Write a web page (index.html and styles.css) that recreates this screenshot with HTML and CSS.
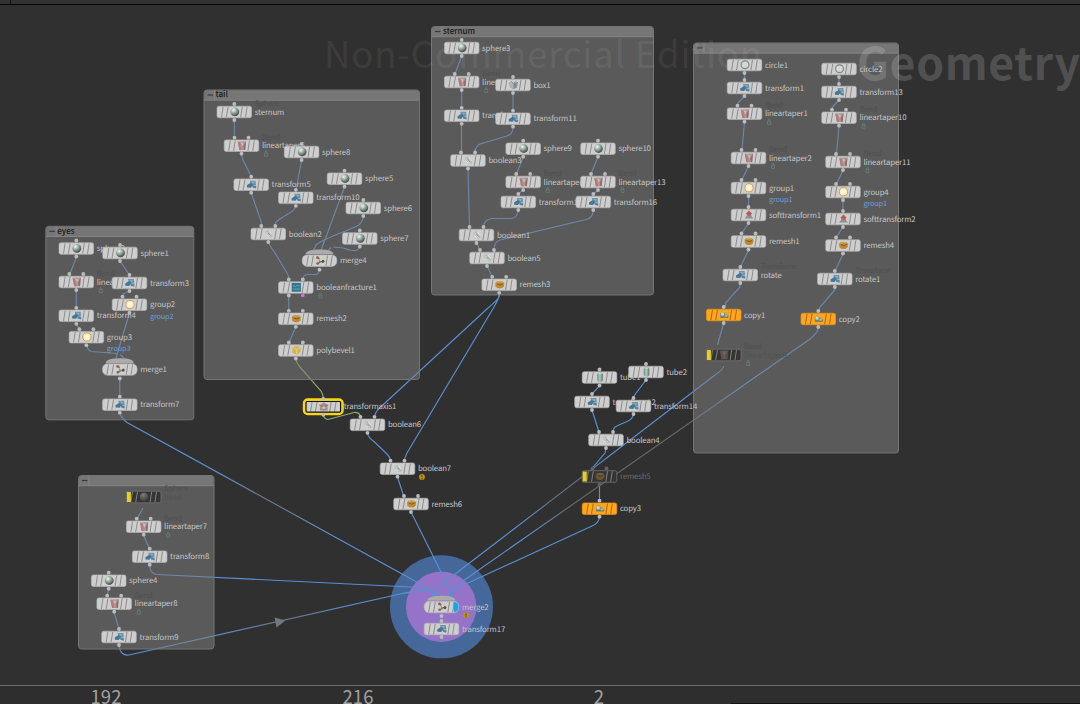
FILE: index.html
```html
<!DOCTYPE html>
<html lang="en">
<head>
<meta charset="utf-8">
<title>Network editor</title>
<link rel="stylesheet" href="styles.css">
</head>
<body>
<header class="topbar"><span class="topbar-split"></span></header>
<main class="network">
<svg class="canvas" viewBox="0 5 1080 680" width="1080" height="680">
  <defs>
    <radialGradient id="ball" cx=".36" cy=".3" r=".75"><stop offset="0" stop-color="#f2f7f3"/><stop offset=".35" stop-color="#a9bab0"/><stop offset="1" stop-color="#34433e"/></radialGradient>
    <radialGradient id="glow"><stop offset="0" stop-color="#fffef0"/><stop offset="1" stop-color="#ffeab0"/></radialGradient>
    <linearGradient id="tubeFill"><stop offset="0" stop-color="#6f9384"/><stop offset=".5" stop-color="#b0c6bb"/><stop offset="1" stop-color="#547365"/></linearGradient>
    <linearGradient id="fadeEyes" gradientUnits="userSpaceOnUse" x1="124" y1="422" x2="430" y2="590"><stop offset=".3" stop-color="#5a8fd2"/><stop offset=".42" stop-color="#6c7a8c"/><stop offset=".5" stop-color="#6c7a8c"/><stop offset=".66" stop-color="#5a8fd2"/></linearGradient>
    <linearGradient id="fadeArrow" gradientUnits="userSpaceOnUse" x1="130" y1="655" x2="420" y2="592"><stop offset=".3" stop-color="#5a8fd2"/><stop offset=".5" stop-color="#68798d"/><stop offset=".58" stop-color="#68798d"/><stop offset=".74" stop-color="#5a8fd2"/></linearGradient>
    <linearGradient id="fadeBend" gradientUnits="userSpaceOnUse" x1="723" y1="367" x2="441" y2="590"><stop offset=".4" stop-color="#5a8fd2"/><stop offset=".5" stop-color="#686e76"/><stop offset=".6" stop-color="#686e76"/><stop offset=".72" stop-color="#5a8fd2"/></linearGradient>
    <linearGradient id="fadeCopy" gradientUnits="userSpaceOnUse" x1="818" y1="330" x2="448" y2="592"><stop offset=".22" stop-color="#5a8fd2"/><stop offset=".33" stop-color="#636669"/><stop offset=".66" stop-color="#636669"/><stop offset=".8" stop-color="#5a8fd2"/></linearGradient>

    <g id="slats"><path d="M-12.800 5.200L-11.200-5.200M-8 5.200L-6.200-5.200M6.400 5.200L8-5.200M11.200 5.200L12.800-5.200"/></g>
    <g id="i-sphere"><circle r="4.400" fill="url(#ball)"/></g>
    <g id="i-circle"><circle r="3.900" fill="#d3d8d5" stroke="#7d8a84" stroke-width="1.200"/></g>
    <g id="i-group"><circle r="4.100" fill="url(#glow)" stroke="#c99a5c" stroke-width=".9"/></g>
    <g id="i-bend"><path d="M-4.200-4L4-4.200 3.200 4.400-2.600 4.400Z" fill="#a89896"/><path d="M-4.200-4L-1.800-2.400-.4 4.400-2.600 4.400Z" fill="#b97676"/><path d="M4-4.600L1.400.6 1.800 4.200 3.200 4.400Z" fill="#96686a"/><path d="M-1.400-3L1.400-2.400 .4 1Z" fill="#c9c3bf"/></g>
    <g id="i-transform"><path d="M-2-3.800L3.800-3.800 4.400.8.5.4-1.400-1.200Z" fill="#6b94a9"/><path d="M-4.800.8L-1-1.800 1.600 0-.8 3.200-4.600 3Z" fill="#457696"/><path d="M.4.200L4.600 1.600 4.200 4 .8 3Z" fill="#5484a0"/><path d="M-.6-3L2.800-2.400 1.800-.8Z" fill="#9ab4bf"/></g>
    <g id="i-boolean"><path d="M-3.600-2.600L-.6-3.800 2 0 3.800 1.800 2.600 3.800-.4 3 -2.600 1Z" fill="#b3bab4"/><path d="M-2.400-2L1.600 2.600M-3 .4L0 3M.4-2.600L3 .6" stroke="#e6e9e6" stroke-width=".9"/><path d="M-1-1L1.400 1.600" stroke="#7d8a83" stroke-width=".8"/></g>
    <g id="i-merge"><path d="M-3-3L-.4-1.400 0 1.600-3 3.400M-.2.200L3 .4" fill="none" stroke="#857d6c" stroke-width="1.800"/><circle cx="-2.600" cy="-2.900" r="1.400" fill="#8f5f62"/><circle cx="-2.400" cy="3" r="1.300" fill="#776c62"/><circle cx="2.800" cy=".8" r="1.600" fill="#5c504b"/><circle cx=".8" cy="-1" r="1.500" fill="#d0d6b9"/></g>
    <g id="i-remesh"><path d="M-4.400-1.600Q-3.600-3.600 0-3.600T4.600-1.600L4.200 1.600Q2.600 3.800 0 3.800T-4.200 1.600Z" fill="#bd8830"/><path d="M-2.600-.8Q0 1.400 3-.6" stroke="#80591f" stroke-width="1" fill="none"/><path d="M-3-2Q0-3.400 3-2.200" stroke="#deb35f" stroke-width=".9" fill="none"/></g>
    <g id="i-bevel"><path d="M-4-2.800L0-4.400 4.200-2.800 4.200 1.800.6 4.400-3.800 2.400Z" fill="#d0b44c"/><path d="M-3.400-2.600L.4-1.200 3.800-2.600M.4-1.200L.4 4" stroke="#e8d688" stroke-width=".9" fill="none"/></g>
    <g id="i-fracture"><rect x="-4.600" y="-4.400" width="9.200" height="8.800" fill="#33748f"/><path d="M-3.600-1.600L-1-.8 1-1.800 3.800-1.200M-3.600 1.800H3.800" stroke="#76a5b5" stroke-width=".9" fill="none"/></g>
    <g id="i-axis"><path d="M-4 4L-3.400-1.600 0-4.400 3.400-1.600 4 4Z" fill="#a08e8c"/><path d="M-4.400-1.600L0 .2 4.400-1.600M0 .2V4" stroke="#a4656a" stroke-width="1.100" fill="none"/><circle cy="1" r="1.600" fill="#b9cba9"/></g>
    <g id="i-soft"><path d="M-4.600 3.800Q-2.800 3-2.200.2L2.200.2Q2.800 3 4.600 3.800Z" fill="#84948e"/><path d="M-3-1.400L0-4.200 3-1.400 1.400.8-1.400.8Z" fill="#c05558"/></g>
    <g id="i-box"><path d="M-4.400-2.800L0-1.400 4.400-3 3.400 2.600 0 4.400-3.400 2.400Z" fill="#7f8f92"/><path d="M-4-2.600L0-1.400 0 4.400-3.200 2.400Z" fill="#a9b6b8"/><path d="M-2.800-3.800L0-1.400 3-3.800" stroke="#728286" stroke-width=".8" fill="none"/></g>
    <g id="i-tube"><rect x="-2.800" y="-4.600" width="5.600" height="9.200" rx="1.800" fill="url(#tubeFill)"/><ellipse cy="-3.600" rx="2" ry=".6" fill="#c3d1ca"/></g>
    <g id="i-copy"><path d="M-4.400-1.200L-1.600-3.200.6-1.800 4.600 1 4 2.800-3.800 2.400Z" fill="#7e9180"/><circle cx="-1.800" cy="-.8" r="1.700" fill="#cad7c6"/><circle cx="2" cy="1.200" r="1.200" fill="#b2c0a9"/><path d="M-3.800 2.400H4" stroke="#566151" stroke-width=".8"/></g>
  </defs>

  <circle class="ring-display" cx="441.500" cy="606.800" r="51.500"/>
  <circle class="ring-template" cx="441.200" cy="606.800" r="35.200"/>
  <g id="wires"></g>
  <path class="flow-arrow" d="M274.500 617.500L285.500 620.500 276.500 627.500Z"/>
  <g id="boxes"></g>
  <text class="mark" x="324" y="68" textLength="438">Non-Commercial Edition</text>
  <text class="mark mark-bold" x="857" y="79.500" textLength="223">Geometry</text>
  <g id="labels"></g>
  <g id="nodes"></g>
</svg>
</main>
<footer class="timeline">
  <span class="frame">192</span><span class="frame">216</span><span class="frame">2</span>
  <i class="playbar"></i>
</footer>
<script src="graph.js"></script>
</body>
</html>
```
FILE: styles.css
```css
body {
  margin: 0;
  width: 1080px;
  height: 704px;
  overflow: hidden;
  display: flex;
  flex-direction: column;
  background: #303030;
  font-family: "Noto Sans CJK SC", "Open Sans", sans-serif;
}
.topbar { flex: 0 0 4px; display: flex; border-bottom: 1px solid #050505; background: #323232; }
.topbar-split { margin-left: 10px; width: 1px; height: 4px; background: #111; }
.network { flex: 0 0 680px; }
.canvas { display: block; }
.timeline {
  position: relative;
  flex: 0 0 19px;
  display: grid;
  grid-template-columns: 252px 241px 251px;
  border-top: 1px solid #6a6a6a;
  box-sizing: border-box;
  overflow: hidden;
  background: #2e2e2e;
}
.frame {
  width: 212px;
  text-align: center;
  font-size: 18.500px;
  line-height: 20px;
  color: #a0a0a0;
}
.playbar { position: absolute; left: 731px; right: 0; bottom: 0; height: 1px; background: #151010; }

.ring-display { fill: #456799; }
.ring-template { fill: #9473c9; }
.wire { fill: none; stroke: #5a8fd2; stroke-width: 1.150; }
.wire-green { stroke: #8dad66; }
.flow-arrow { fill: #707982; }
.box { fill: #808080; fill-opacity: .52; stroke: #747474; stroke-width: 1; }
.box-head { fill: #767676; }
.box-line { stroke: #858585; stroke-width: 1; }
.box-dash { stroke: #3a3a3a; stroke-width: 1.200; }
.box-title { font-size: 8px; font-weight: 500; fill: #181818; }
.mark { font-size: 36.500px; fill: #fff; fill-opacity: .08; }
.mark-bold { font-size: 44.500px; font-weight: 700; fill-opacity: .17; }
.label, .type { text-rendering: geometricPrecision; letter-spacing: -.13px; }
.label { font-size: 7.800px; fill: #c6c6c6; }
.label-dim { fill: #6c6c6c; }
.label-ghost { fill: #515151; }
.label-group { font-size: 7.300px; fill: #6c9edc; }
.type { font-size: 7.600px; fill: #4f4f4f; }
.lock { fill: none; stroke: #627e76; stroke-width: .9; }
.plate { fill: #cecece; stroke: #b4b4b4; stroke-width: .6; }
.slats { stroke: #8c8c8c; stroke-width: 1; }
.dot { fill: #bcbcbc; }
.dot-extra { fill: #df6fd4; }
.cap { fill: #ababab; }
.orange .plate { fill: #ffa51e; stroke: #ee9410; }
.orange .slats { stroke: #a86a12; }
.off .plate { fill: #353535; stroke: #747474; stroke-width: .8; }
.off .slats { stroke: #808080; }
.off .icon { opacity: .38; }
.off .dot { fill: #626262; }
.bypass { fill: #e6cf25; }
.select { fill: none; stroke: #ffd60a; stroke-width: 3; }
.select-inner { fill: none; stroke: #151515; stroke-width: 1.200; }
.display-flag { fill: #0fa8ec; }
.warn { fill: #c09512; }
.warn-mark { stroke: #4d3a00; stroke-width: 1; }
```
FILE: graph.js
```js
const NS = 'http://www.w3.org/2000/svg';

function add(parent, tag, attrs, text) {
  const el = document.createElementNS(NS, tag);
  for (const k in attrs) el.setAttribute(k, attrs[k]);
  if (text) el.textContent = text;
  parent.appendChild(el);
  return el;
}

// x, y, width, height, title
const boxes = [
  [204, 90, 215.5, 289.5, 'tail'],
  [431.5, 26.5, 222, 268.5, 'sternum'],
  [693.5, 43, 205, 410, ''],
  [45.8, 226.3, 148, 193.5, 'eyes'],
  [78.5, 475.5, 135.5, 173.5, '']
];

// name, x, y, icon, inputs, options
const nodes = [
  ['sternum', 234.3, 112, 'sphere', 1, {type: 'Sphere'}],
  ['lineartaper5', 241.5, 145.7, 'bend', 2, {type: 'Bend', lock: 1}],
  ['sphere8', 301.6, 152, 'sphere', 1],
  ['transform5', 251.2, 184.7, 'transform', 1],
  ['transform10', 295.8, 197.8, 'transform', 1],
  ['sphere5', 344.5, 178.7, 'sphere', 1],
  ['sphere6', 363.3, 208, 'sphere', 1],
  ['sphere7', 359.8, 238.5, 'sphere', 1],
  ['boolean2', 268.3, 234, 'boolean', 2],
  ['merge4', 319.5, 260.7, 'merge', 0, {merge: 1}],
  ['booleanfracture1', 295.8, 287.5, 'fracture', 2, {twoOut: 1, lock: 1}],
  ['remesh2', 295.8, 318.8, 'remesh', 2],
  ['polybevel1', 295.8, 350.5, 'bevel', 2],
  ['transformaxis1', 323.3, 406.8, 'axis', 1, {selected: 1}],
  ['boolean6', 367.5, 424.8, 'boolean', 2],
  ['boolean7', 397.5, 468.7, 'boolean', 2, {warn: 1}],
  ['remesh6', 411, 504, 'remesh', 2],
  ['sphere3', 461.7, 48, 'sphere', 1],
  ['lineartaper12', 461.7, 82, 'bend', 2, {type: 'Bend', lock: 1, clip: 5}],
  ['transform15', 461.7, 115.8, 'transform', 1, {clip: 6}],
  ['box1', 513, 85, 'box', 1],
  ['transform11', 513, 118.7, 'transform', 1],
  ['boolean3', 468, 160.5, 'boolean', 2],
  ['sphere9', 523.2, 148.7, 'sphere', 1],
  ['sphere10', 598, 148.7, 'sphere', 1],
  ['lineartaper3', 523.2, 182, 'bend', 2, {type: 'Bend', lock: 1}],
  ['lineartaper13', 598, 182, 'bend', 2, {type: 'Bend', lock: 1}],
  ['transform12', 518.3, 202, 'transform', 1],
  ['transform16', 593.3, 202, 'transform', 1],
  ['boolean1', 476.5, 235, 'boolean', 2],
  ['boolean5', 487, 258, 'boolean', 2],
  ['remesh3', 499.2, 284.8, 'remesh', 2],
  ['circle1', 744.5, 65, 'circle', 0],
  ['transform1', 744.5, 88, 'transform', 1],
  ['lineartaper1', 744.5, 113.7, 'bend', 2, {type: 'Bend', lock: 1}],
  ['lineartaper2', 748.5, 158, 'bend', 2, {type: 'Bend', lock: 1}],
  ['group1', 748.5, 188, 'group', 2, {group: 'group1'}],
  ['softtransform1', 748.5, 215, 'soft', 1],
  ['remesh1', 748.5, 241.5, 'remesh', 2],
  ['rotate', 740.3, 275, 'transform', 1, {type: 'Transform'}],
  ['copy1', 723.7, 315, 'copy', 1, {cls: 'orange'}],
  ['lineartaper9', 723.7, 355, 'bend', 0, {cls: 'off', type: 'Bend', ghost: 1, lock: 1, noOut: 1}],
  ['circle2', 839, 69, 'circle', 0],
  ['transform13', 839, 92, 'transform', 1],
  ['lineartaper10', 839, 117.7, 'bend', 2, {type: 'Bend', lock: 1}],
  ['lineartaper11', 843, 162, 'bend', 2, {type: 'Bend', lock: 1}],
  ['group4', 843, 192, 'group', 2, {group: 'group1'}],
  ['softtransform2', 843, 219, 'soft', 1],
  ['remesh4', 843, 245.5, 'remesh', 2],
  ['rotate1', 834.8, 279, 'transform', 1, {type: 'Transform'}],
  ['copy2', 818.3, 319, 'copy', 1, {cls: 'orange'}],
  ['sphere2', 76.3, 248.5, 'sphere', 1],
  ['sphere1', 120, 253, 'sphere', 1],
  ['lineartaper4', 76.3, 282, 'bend', 2, {type: 'Bend', lock: 1, clip: 5}],
  ['transform3', 129.5, 283, 'transform', 1],
  ['group2', 129.5, 304.7, 'group', 2, {group: 'group2'}],
  ['transform4', 76.3, 315.8, 'transform', 1],
  ['group3', 86.4, 337.2, 'group', 2, {group: 'group3'}],
  ['merge1', 119.8, 369.5, 'merge', 0, {merge: 1}],
  ['transform7', 119.8, 404.7, 'transform', 1],
  ['head', 143.7, 497, 'sphere', 0, {cls: 'off', type: 'Sphere', ghost: 1, noOut: 1}],
  ['lineartaper7', 143.7, 526.7, 'bend', 2, {type: 'Bend', lock: 1}],
  ['transform8', 149.7, 556.7, 'transform', 1],
  ['sphere4', 108.7, 580.7, 'sphere', 1],
  ['lineartaper8', 114.2, 603.7, 'bend', 2, {type: 'Bend', lock: 1}],
  ['transform9', 119, 637, 'transform', 1],
  ['tube1', 599.5, 377.5, 'tube', 1],
  ['tube2', 646, 372, 'tube', 1],
  ['transform12', 592, 402, 'transform', 1],
  ['transform14', 633.5, 406, 'transform', 1],
  ['boolean4', 606, 440, 'boolean', 2],
  ['remesh5', 599.5, 476.5, 'remesh', 2, {cls: 'off', dim: 1}],
  ['copy3', 599.5, 508.7, 'copy', 1, {cls: 'orange'}],
  ['merge2', 441.5, 607, 'merge', 0, {merge: 1, display: 1, warn: 1}],
  ['transform17', 441.5, 629, 'transform', 1]
];

const wires = [
  'M234.300 120V137.500', 'M241.500 154Q241.500 157 244 162L249 172Q251 175 251.200 177',
  'M251.200 193L261 221Q261.500 223 261.500 226', 'M301.600 160L296 190',
  'M295.800 206Q295.500 210 288 214T276 222Q275 224 275.300 226',
  'M268.500 242Q269 245 275 253L287 273Q289 276 289 279.500',
  'M344.500 187L320 253', 'M363.500 216Q363 221 359 225C351 230 323 238 316 245L312 253',
  'M359.800 247Q358 250 356 250.500Q352 251 343 248L333 247M331 247.500L327 252',
  'M319.500 269Q319 274 316 274.500H307Q303 275 302.800 279.500',
  'M288.800 296V311', 'M295.800 327L289 342.500',
  'M461.700 56L455 74', 'M461.700 90V108', 'M461.500 124V153', 'M513 93V111',
  'M513 127Q513 134 507 136L480 144Q475 147 475 152.500', 'M468 169L469.500 227',
  'M523.200 157L516.500 174', 'M598 157L591 174', 'M523 190L518.500 194', 'M598 190L593.500 194',
  'M518.300 210Q518 217 512 218.500H491Q484 220 483.500 227',
  'M593.300 210Q593 218 586 219.500L500 240Q494 242 494 250',
  'M476.500 243L480 250', 'M487 266L492.500 277',
  'M499.200 293V296Q499 299 488 308L385 403Q375 411 374.500 416.500',
  'M499.200 293V296Q498 300 494 307L407 453Q404.500 458 404.500 461',
  'M744.500 73V80', 'M744.500 96L738 103V106', 'M744.500 122L742 150', 'M748.500 166L742 180',
  'M748.500 196V207', 'M748.500 223L742 233', 'M748.500 250L740.500 267',
  'M740.300 283L740 287 725.500 303V307', 'M723.700 323L717.500 345',
  'M839 77V84', 'M839 100L832.500 107V110', 'M839 126L836.500 154', 'M843 170L836.500 184',
  'M843 200V211', 'M843 227L836.500 237', 'M843 254L835 271', 'M834.800 287V290L820 307 818.500 311',
  'M76.300 257L70 274', 'M120 261L129.500 275', 'M129.500 291L123 294V297', 'M76.300 290V308',
  'M76.300 324L79.500 329', 'M129.500 313L116 358',
  'M86.400 345Q88 350 91 351.500L117 353.500M120 354.500L124 358', 'M119.800 378V397',
  'M143 508L137 519', 'M143.500 535L149.500 549', 'M108.700 589L107 596', 'M114 612L119 629',
  'M599.500 386L592 394', 'M646 380L634 396 633.500 398', 'M592 410L599 432',
  'M633.500 414Q633 419 627 421.500T615 427Q613 429 613 432', 'M606 448L605 453 594 466 592.500 469',
  'M599.500 485V501', 'M367.500 433Q367.500 437 375 442.500L387 454Q390.500 458 390.500 461',
  'M397.500 477L404 497', 'M411 512L436 562 450 590 452 597', 'M441.500 615V622'
];
// d, class, gradient
const longWires = [
  ['M295.800 359Q296 362 299 366L321 391Q323 394 323.300 398', 'wire-green'],
  ['M323.300 415Q324 419 328 419.500L354 412.500Q359 412 360.500 416.500', 'wire-green'],
  ['M119.800 413Q121 418 127 422.500L424 586Q433 591 434 597', '', 'fadeEyes'],
  ['M149.700 565Q150 574 157 574.500L410 587Q434 589 440 597', ''],
  ['M119 645Q120 656 129 655L400 594Q433 587 437 597', '', 'fadeArrow'],
  ['M723.700 366Q723 370 715 375L446 581Q434 589 431 597', '', 'fadeBend'],
  ['M818.300 327Q818 333 810 339L460 583Q449 591 446 597', '', 'fadeCopy'],
  ['M599.500 517Q599 523 592 526L468 583Q452 590 450 597', '']
];

const $ = id => document.getElementById(id);

for (const d of wires) add($('wires'), 'path', {d, class: 'wire'});
for (const [d, cls, grad] of longWires) {
  const el = add($('wires'), 'path', {d, class: 'wire ' + cls});
  if (grad) el.style.stroke = `url(#${grad})`;
}

for (const [x, y, w, h, title] of boxes) {
  const g = $('boxes');
  add(g, 'rect', {x, y, width: w, height: h, rx: 3, class: 'box'});
  add(g, 'path', {d: `M${x + .5} ${y + 10}V${y + 3}q0-2.500 2.500-2.500H${x + w - 3}q2.500 0 2.500 2.500V${y + 10}Z`, class: 'box-head'});
  add(g, 'path', {d: `M${x} ${y + 10.2}H${x + w}M${x + 10.5} ${y}v10`, class: 'box-line'});
  add(g, 'path', {d: `M${x + 3.5} ${y + 5}h5.500`, class: 'box-dash'});
  if (title) add(g, 'text', {x: x + 11.5, y: y + 7.2, class: 'box-title'}, title);
}

for (const [name, x, y, icon, inputs, o = {}] of nodes) {
  const lg = $('labels');
  const lx = x + 20.4;
  if (o.type) add(lg, 'text', {x: lx, y: y - 6, class: 'type'}, o.type);
  add(lg, 'text', {x: lx, y: y + 2.5, class: 'label' + (o.dim ? ' label-dim' : o.ghost ? ' label-ghost' : '')}, o.clip ? name.slice(0, o.clip) : name);
  if (o.group) add(lg, 'text', {x: lx, y: y + 14, class: 'label label-group'}, o.group);
  if (o.lock) add(lg, 'path', {d: `M${x + 23} ${y + 7.5}h3v3h-3zM${x + 23.6} ${y + 7.5}v-1.500q.9-1.200 1.800 0v1.500`, class: 'lock'});
  if (o.warn) {
    add(lg, 'circle', {cx: x + 24.5, cy: y + 8.2, r: 2.9, class: 'warn'});
    add(lg, 'path', {d: `M${x + 24.5} ${y + 6.4}v2.300m0 .7v1`, class: 'warn-mark'});
  }

  const g = add($('nodes'), 'g', {transform: `translate(${x} ${y})`, class: 'node ' + (o.cls || '')});
  if (o.merge) add(g, 'path', {d: 'M-14-6.500Q-14-11 0-11.200T14-6.500Z', class: 'cap'});
  if (o.selected) add(g, 'rect', {x: -19, y: -7, width: 38, height: 14, rx: 3.5, class: 'select'});
  add(g, 'rect', {x: -17.3, y: -5.8, width: 34.6, height: 11.6, rx: o.merge ? 5 : 2, class: 'plate'});
  add(g, 'use', {href: '#slats', class: 'slats'});
  if (o.selected) add(g, 'rect', {x: -17.3, y: -5.3, width: 34.6, height: 10.6, rx: 1, class: 'select-inner'});
  if (o.cls === 'off') add(g, 'rect', {x: -16.8, y: -5, width: 4, height: 10, class: 'bypass'});
  if (o.display) add(g, 'path', {d: 'M12-5Q17-5 17 0T12.500 5Z', class: 'display-flag'});
  add(g, 'use', {href: '#i-' + icon, class: 'icon', x: .5, y: -.2});
  const ins = inputs === 2 ? [-7, 7] : inputs === 1 ? [0] : [];
  for (const dx of ins) add(g, 'circle', {cx: dx, cy: -8, r: 1.9, class: 'dot'});
  if (o.twoOut) {
    add(g, 'circle', {cx: -7, cy: 8, r: 1.9, class: 'dot'});
    add(g, 'circle', {cx: 7, cy: 8, r: 1.8, class: 'dot-extra'});
  } else if (!o.noOut) {
    add(g, 'circle', {cx: 0, cy: o.merge ? 9 : 8, r: 1.9, class: 'dot'});
  }
}
```
